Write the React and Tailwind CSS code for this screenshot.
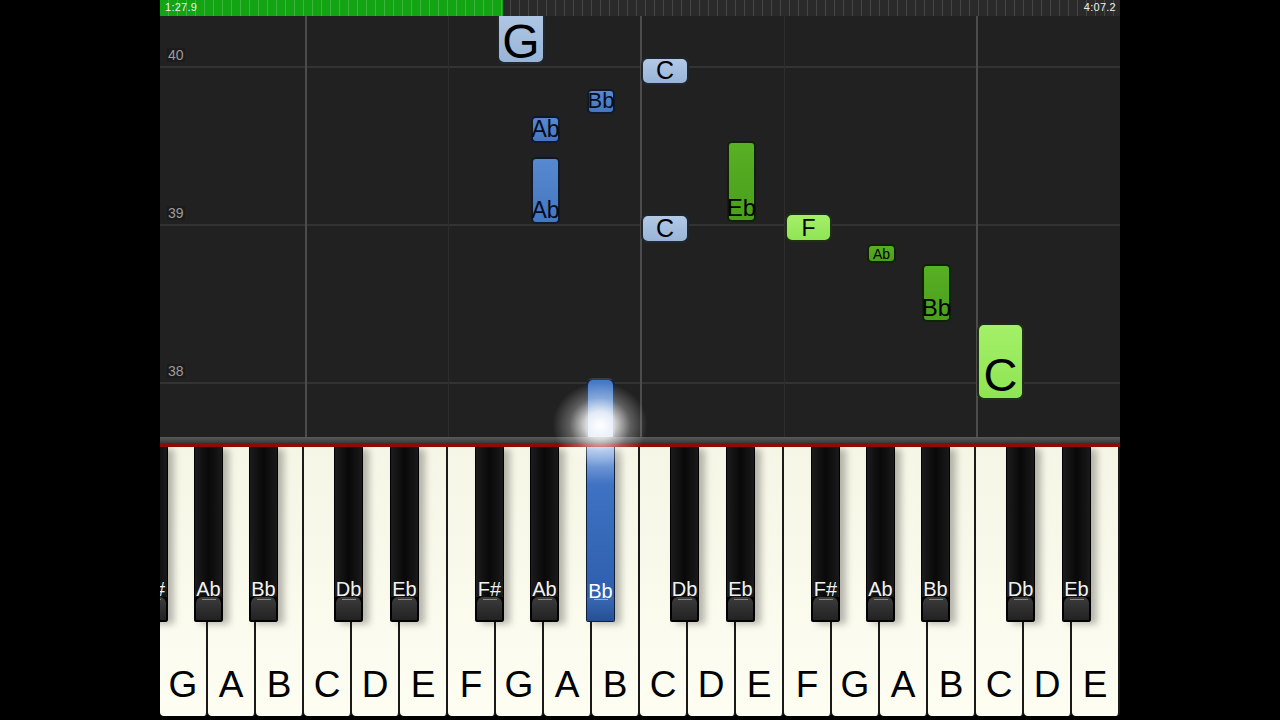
import React from "react";

const WHITE = ["G", "A", "B", "C", "D", "E", "F", "G", "A", "B", "C", "D", "E", "F", "G", "A", "B", "C", "D", "E"];

const BLACK = [
  { x: -21, n: "F#" },
  { x: 34, n: "Ab" },
  { x: 89, n: "Bb" },
  { x: 174, n: "Db" },
  { x: 230, n: "Eb" },
  { x: 315, n: "F#" },
  { x: 370, n: "Ab" },
  { x: 426, n: "Bb", on: true },
  { x: 510, n: "Db" },
  { x: 566, n: "Eb" },
  { x: 651, n: "F#" },
  { x: 706, n: "Ab" },
  { x: 761, n: "Bb" },
  { x: 846, n: "Db" },
  { x: 902, n: "Eb" },
];

const LIGHT_BLUE = "bg-linear-to-b from-[#b3cae6] to-[#98b4d8] text-black rounded-[7px]";
const BLUE = "bg-linear-to-b from-[#5689cf] to-[#4577c0] text-[#060c1c] rounded-[5px]";
const GREEN = "bg-linear-to-b from-[#58b024] to-[#4a9f1b] text-black rounded-[5px]";
const LIGHT_GREEN = "bg-linear-to-b from-[#a4f068] to-[#8fe454] text-black rounded-[7px]";

const NOTES = [
  { x: 337, y: -10, w: 48, h: 58, label: "G", cls: LIGHT_BLUE, txt: "text-[48px] translate-y-[4px]" },
  { x: 481, y: 41, w: 48, h: 28, label: "C", cls: LIGHT_BLUE, txt: "text-[25px]" },
  { x: 427, y: 73, w: 28, h: 25, label: "Bb", cls: BLUE, txt: "text-[22px]" },
  { x: 371, y: 100, w: 29, h: 27, label: "Ab", cls: BLUE, txt: "text-[23px]" },
  { x: 371, y: 141, w: 29, h: 67, label: "Ab", cls: BLUE, txt: "text-[23px]" },
  { x: 481, y: 198, w: 48, h: 29, label: "C", cls: LIGHT_BLUE, txt: "text-[25px]" },
  { x: 567, y: 125, w: 29, h: 81, label: "Eb", cls: GREEN, txt: "text-[24px]" },
  { x: 625, y: 197, w: 47, h: 29, label: "F", cls: LIGHT_GREEN, txt: "text-[23px]" },
  { x: 707, y: 228, w: 29, h: 19, label: "Ab", cls: GREEN, txt: "text-[14px]" },
  { x: 762, y: 248, w: 29, h: 58, label: "Bb", cls: GREEN, txt: "text-[24px]" },
  { x: 817, y: 307, w: 47, h: 77, label: "C", cls: LIGHT_GREEN, txt: "text-[47px]" },
];

function Note({ n }) {
  return (
    <div
      className={`absolute flex flex-col items-center justify-end overflow-visible border-2 border-black/80 ${n.cls}`}
      style={{ left: n.x, top: n.y, width: n.w, height: n.h }}
    >
      <span className={`leading-none whitespace-nowrap ${n.txt}`}>{n.label}</span>
    </div>
  );
}

function BlackKey({ k }) {
  return (
    <div
      className="absolute top-0 h-[175px] w-[29px] flex flex-col shadow-[6px_2px_7px_rgba(0,0,0,0.28)] z-10"
      style={{ left: k.x }}
    >
      {k.on ? (
        <div className="flex-1 flex items-end justify-center bg-linear-to-b from-[#9dbbe8] via-[#3f72c2] via-25% to-[#2d5fae] border-x border-[#10203a]">
          <span className="text-[20px] leading-none text-white translate-y-[4px]">{k.n}</span>
        </div>
      ) : (
        <div className="flex-1 flex items-end justify-center bg-linear-to-r from-[#1c1c1c] via-[#090909] to-[#1a1a1a] border-x border-black">
          <span className="text-[20px] leading-none text-[#f2f2f2] translate-y-[2px]">{k.n}</span>
        </div>
      )}
      {k.on ? (
        <div className="h-[25px] flex flex-col items-center bg-linear-to-b from-[#3a6ab5] to-[#244f95] border-x border-b border-[#10203a] rounded-b-[2px]">
          <div className="mt-[2px] h-px w-[14px] bg-[#8fb0e0]" />
        </div>
      ) : (
        <div className="h-[25px] flex flex-col items-center bg-black px-[2px] pb-[2px] rounded-b-[2px]">
          <div className="flex-1 w-full flex flex-col items-center rounded-t-[6px] bg-linear-to-b from-[#3c3c3c] to-[#222222]">
            <div className="mt-[2px] h-px w-[14px] bg-[#8a8a8a]" />
          </div>
        </div>
      )}
    </div>
  );
}

export default function App() {
  return (
    <div className="flex h-[720px] w-[1280px] bg-black overflow-hidden" style={{ fontFamily: '"Liberation Sans", Arial, sans-serif' }}>
      <div className="w-[160px] bg-black" />

      <div className="relative w-[960px] flex flex-col">
        {/* progress bar */}
        <div className="relative h-4 flex bg-[#2a2a2a] bg-[repeating-linear-gradient(90deg,transparent_0,transparent_8px,rgba(255,255,255,0.13)_8px,rgba(255,255,255,0.13)_9px)]">
          <div className="w-[343px] bg-[#12a412] bg-[repeating-linear-gradient(90deg,transparent_0,transparent_8px,rgba(255,255,255,0.18)_8px,rgba(255,255,255,0.18)_9px)]" />
          <span className="absolute left-[5px] top-[2px] text-[11px] leading-none tracking-wide text-[#eeeeee]">1:27.9</span>
          <span className="absolute right-[4px] top-[2px] text-[11px] leading-none tracking-wide text-[#eeeeee]">4:07.2</span>
        </div>

        {/* note roll */}
        <div className="relative h-[421px] bg-[#212121] overflow-hidden">
          <div className="absolute left-0 right-0 top-[50px] h-[2px] bg-[#333333]" />
          <div className="absolute left-0 right-0 top-[208px] h-[2px] bg-[#333333]" />
          <div className="absolute left-0 right-0 top-[366px] h-[2px] bg-[#333333]" />
          <div className="absolute top-0 bottom-0 left-[145px] w-[2px] bg-[#4c4c4c]" />
          <div className="absolute top-0 bottom-0 left-[288px] w-px bg-[#2d2d2d]" />
          <div className="absolute top-0 bottom-0 left-[480px] w-[2px] bg-[#4c4c4c]" />
          <div className="absolute top-0 bottom-0 left-[624px] w-px bg-[#2d2d2d]" />
          <div className="absolute top-0 bottom-0 left-[816px] w-[2px] bg-[#4c4c4c]" />

          <span className="absolute left-[7px] top-[32px] text-[14px] leading-none text-[#9c9c9c] bg-[#1b1b1b] px-px">40</span>
          <span className="absolute left-[7px] top-[190px] text-[14px] leading-none text-[#9c9c9c] bg-[#1b1b1b] px-px">39</span>
          <span className="absolute left-[7px] top-[348px] text-[14px] leading-none text-[#9c9c9c] bg-[#1b1b1b] px-px">38</span>

          {NOTES.map((n, i) => (
            <Note key={i} n={n} />
          ))}

          <div className="absolute left-[426px] top-[362px] h-[70px] w-[29px] rounded-t-[7px] border-2 border-b-0 border-black/70 bg-linear-to-b from-[#4578c4] via-[#5f8ed2] via-40% to-[#b9cfee]" />
        </div>

        {/* rail */}
        <div className="h-[6px] bg-linear-to-b from-[#5a5a5a] to-[#3a3a3a]" />
        <div className="h-1 bg-[#8e0b0b]" />

        {/* keyboard */}
        <div className="relative flex-1 bg-black overflow-hidden">
          <div className="flex h-[269px]">
            {WHITE.map((l, i) => (
              <div
                key={i}
                className="w-12 flex items-end justify-center pb-[13px] bg-linear-to-b from-[#f6f6e6] to-[#fdfdf2] border-r-2 border-[#1a1a1a] rounded-b-[4px]"
              >
                <span className="text-[37px] leading-none text-black">{l}</span>
              </div>
            ))}
          </div>
          {BLACK.map((k, i) => (
            <BlackKey key={i} k={k} />
          ))}
        </div>

        {/* glow at the hit line */}
        <div className="absolute left-[392px] top-[382px] h-[86px] w-[96px] rounded-full bg-[radial-gradient(ellipse,rgba(255,255,255,1)_0%,rgba(255,255,255,0.8)_22%,rgba(255,255,255,0.28)_45%,transparent_70%)] z-20 pointer-events-none" />
      </div>

      <div className="w-[160px] bg-black" />
    </div>
  );
}
